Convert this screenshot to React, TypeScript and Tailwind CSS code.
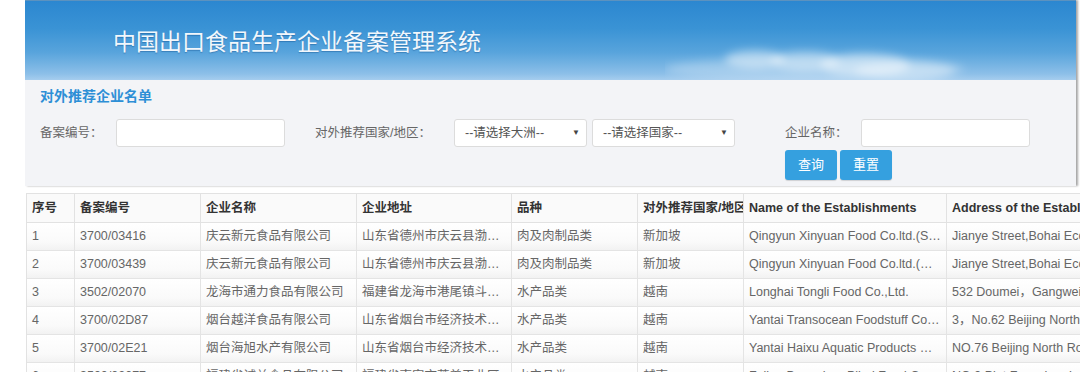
import React from "react";

const F = "font-['Liberation_Sans','Noto_Sans_CJK_SC',sans-serif]";

const cols = [
  { w: 48, h: "序号" },
  { w: 126, h: "备案编号" },
  { w: 156, h: "企业名称" },
  { w: 155, h: "企业地址" },
  { w: 126, h: "品种" },
  { w: 106, h: "对外推荐国家/地区" },
  { w: 203, h: "Name of the Establishments" },
  { w: 260, h: "Address of the Establishments" },
];

const rows: string[][] = [
  ["1", "3700/03416", "庆云新元食品有限公司", "山东省德州市庆云县渤…", "肉及肉制品类", "新加坡", "Qingyun Xinyuan Food Co.ltd.(S…", "Jianye Street,Bohai Economic Zone"],
  ["2", "3700/03439", "庆云新元食品有限公司", "山东省德州市庆云县渤…", "肉及肉制品类", "新加坡", "Qingyun Xinyuan Food Co.ltd.(…", "Jianye Street,Bohai Economic Zone"],
  ["3", "3502/02070", "龙海市通力食品有限公司", "福建省龙海市港尾镇斗…", "水产品类", "越南", "Longhai Tongli Food Co.,Ltd.", "532 Doumei，Gangwei Town"],
  ["4", "3700/02D87", "烟台越洋食品有限公司", "山东省烟台市经济技术…", "水产品类", "越南", "Yantai Transocean Foodstuff Co…", "3，No.62 Beijing North Road"],
  ["5", "3700/02E21", "烟台海旭水产有限公司", "山东省烟台市经济技术…", "水产品类", "越南", "Yantai Haixu Aquatic Products …", "NO.76 Beijing North Road"],
  ["6", "3500/02077", "福建省诚益食品有限公司", "福建省南安市莆美工业区…", "水产品类", "越南", "Fujian Dongshan Pihai Food Co…", "NO.9 Plot Fengzhou Industrial"],
];

function Select({ text, w }: { text: string; w: string }) {
  return (
    <div className={`${w} h-[28px] bg-white border border-[#dcdcdc] rounded-[3px] flex items-center justify-between pl-[10px] pr-[6px] text-[12.5px] text-[#555]`}>
      <span>{text}</span>
      <span className="text-[8px] text-[#444]">▼</span>
    </div>
  );
}

export default function App() {
  return (
    <div className={`w-[1080px] h-[372px] overflow-hidden bg-white ${F}`}>
      <div className="ml-[25px] w-[1051px] shadow-[2px_0_2px_rgba(0,0,0,0.35)]">
        <header className="relative h-[80px] overflow-hidden border-t border-[#5c92bf] bg-[linear-gradient(180deg,#2c87d0_0%,#3a93d5_35%,#58a4dc_65%,#8cbfe8_92%,#a6cdee_100%)] flex items-center pl-[88px]">
          <svg className="absolute left-[640px] top-[30px]" width="330" height="52" viewBox="0 0 330 52">
            <defs>
              <filter id="b" x="-20%" y="-50%" width="140%" height="200%">
                <feGaussianBlur stdDeviation="4" />
              </filter>
            </defs>
            <g filter="url(#b)" fill="#ffffff">
              <ellipse cx="150" cy="38" rx="150" ry="12" opacity="0.25" />
              <ellipse cx="90" cy="28" rx="30" ry="9" opacity="0.45" />
              <ellipse cx="140" cy="30" rx="35" ry="10" opacity="0.4" />
              <ellipse cx="200" cy="34" rx="45" ry="12" opacity="0.45" />
              <ellipse cx="240" cy="40" rx="50" ry="10" opacity="0.35" />
            </g>
          </svg>
          <h1 className="relative text-[23px] text-[#f2f7fc] font-['Noto_Sans_CJK_SC',sans-serif] tracking-[0px] mt-[-1px] [text-shadow:0_1px_1px_rgba(0,60,120,0.35)]">
            中国出口食品生产企业备案管理系统
          </h1>
        </header>
        <section className="bg-[#f3f4f7] h-[106px] pl-[15px] pt-[6px]">
          <div className="h-[20px] leading-[20px] text-[14px] font-bold text-[#2d8fd6]">对外推荐企业名单</div>
          <div className="mt-[13px] h-[28px] flex items-center text-[12.5px] text-[#666]">
            <span className="w-[76px]">备案编号：</span>
            <div className="w-[169px] h-[28px] bg-white border border-[#dcdcdc] rounded-[3px]" />
            <span className="ml-[30px] w-[139px]">对外推荐国家/地区：</span>
            <Select text="--请选择大洲--" w="w-[133px]" />
            <div className="w-[5px]" />
            <Select text="--请选择国家--" w="w-[143px]" />
            <span className="ml-[50px] w-[76px]">企业名称：</span>
            <div className="w-[169px] h-[28px] bg-white border border-[#dcdcdc] rounded-[3px]" />
          </div>
          <div className="mt-[3px] ml-[745px] flex gap-[3px]">
            <button className="w-[52px] h-[30px] rounded-[3px] bg-[#35a0df] text-white text-[13px] shadow-[0_1px_1px_rgba(0,0,0,0.15)]">查询</button>
            <button className="w-[52px] h-[30px] rounded-[3px] bg-[#35a0df] text-white text-[13px] shadow-[0_1px_1px_rgba(0,0,0,0.15)]">重置</button>
          </div>
        </section>
      </div>
      <div className="mt-[7px] ml-[26px] w-[1200px] border-t border-l border-[#e2e2e2]">
        <div className="flex h-[29px] bg-[#fafafa] border-b border-[#e2e2e2]">
          {cols.map((c, i) => (
            <div
              key={i}
              style={{ width: c.w }}
              className="shrink-0 border-r border-[#e2e2e2] px-[5px] flex items-center text-[12.5px] font-bold text-[#333] whitespace-nowrap overflow-hidden"
            >
              {c.h}
            </div>
          ))}
        </div>
        {rows.map((r, ri) => (
          <div key={ri} className="flex h-[28px] bg-[linear-gradient(180deg,#ffffff_0%,#fafafa_70%,#f2f2f2_100%)] border-b border-[#e4e4e4]">
            {r.map((t, ci) => (
              <div
                key={ci}
                style={{ width: cols[ci].w }}
                className="shrink-0 border-r border-[#e4e4e4] px-[5px] flex items-center text-[12.5px] text-[#666] whitespace-nowrap overflow-hidden"
              >
                {t}
              </div>
            ))}
          </div>
        ))}
      </div>
    </div>
  );
}
